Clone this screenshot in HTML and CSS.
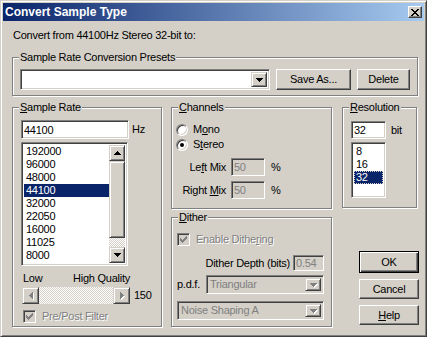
FILE: index.html
```html
<!DOCTYPE html>
<html lang="en">
<head>
<meta charset="UTF-8" />
<meta name="viewport" content="width=device-width, initial-scale=1" />
<title>Convert Sample Type</title>
<link rel="stylesheet" href="styles.css">
</head>
<body>
<div class="window">
    <div class="titlebar">
        <span class="title">Convert Sample Type</span>
        <button type="button" class="close-btn" aria-label="Close">
            <svg width="8" height="7" viewBox="0 0 8 7" shape-rendering="crispEdges"><path d="M0 0h2v1H0zM6 0h2v1H6zM1 1h2v1H1zM5 1h2v1H5zM2 2h4v1H2zM3 3h2v1H3zM2 4h4v1H2zM1 5h2v1H1zM5 5h2v1H5zM0 6h2v1H0zM6 6h2v1H6z"/></svg>
        </button>
    </div>

    <div class="dialog">
        <p class="intro">Convert from 44100Hz Stereo 32-bit to:</p>

        <div class="group presets">
            <span class="group-label">Sample Rate Conversion Presets</span>
            <div class="combo presets-combo">
                <span class="combo-value"></span>
                <span class="combo-btn"><svg width="7" height="4" viewBox="0 0 7 4" shape-rendering="crispEdges"><path d="M0 0h7v1H0zM1 1h5v1H1zM2 2h3v1H2zM3 3h1v1H3z"/></svg></span>
            </div>
            <button type="button" class="btn save-btn">Save As...</button>
            <button type="button" class="btn delete-btn">Delete</button>
        </div>

        <div class="columns">
            <div class="group rate">
                <span class="group-label"><u>S</u>ample Rate</span>
                <div class="field-row">
                    <input class="field rate-field" type="text" value="44100">
                    <span class="unit">Hz</span>
                </div>
                <div class="listbox rate-list">
                    <ul class="list-items">
                        <li>192000</li>
                        <li>96000</li>
                        <li>48000</li>
                        <li class="selected">44100</li>
                        <li>32000</li>
                        <li>22050</li>
                        <li>16000</li>
                        <li>11025</li>
                        <li>8000</li>
                        <li>6000</li>
                    </ul>
                    <div class="vscroll">
                        <span class="scroll-btn"><svg width="7" height="4" viewBox="0 0 7 4" shape-rendering="crispEdges"><path d="M3 0h1v1H3zM2 1h3v1H2zM1 2h5v1H1zM0 3h7v1H0z"/></svg></span>
                        <span class="scroll-thumb"></span>
                        <span class="scroll-track"></span>
                        <span class="scroll-btn"><svg width="7" height="4" viewBox="0 0 7 4" shape-rendering="crispEdges"><path d="M0 0h7v1H0zM1 1h5v1H1zM2 2h3v1H2zM3 3h1v1H3z"/></svg></span>
                    </div>
                </div>
                <div class="scale-labels"><span>Low</span><span>High Quality</span></div>
                <div class="slider-row">
                    <div class="hscroll">
                        <span class="scroll-btn"><svg class="grey-arrow" width="4" height="7" viewBox="0 0 4 7" shape-rendering="crispEdges"><path d="M3 0h1v7H3zM2 1h1v5H2zM1 2h1v3H1zM0 3h1v1H0z"/></svg></span>
                        <span class="scroll-track"></span>
                        <span class="scroll-btn"><svg class="grey-arrow" width="4" height="7" viewBox="0 0 4 7" shape-rendering="crispEdges"><path d="M0 0h1v7H0zM1 1h1v5H1zM2 2h1v3H2zM3 3h1v1H3z"/></svg></span>
                    </div>
                    <span class="slider-value">150</span>
                </div>
                <div class="check disabled">
                    <span class="check-box"><svg width="7" height="7" viewBox="0 0 7 7" shape-rendering="crispEdges"><path d="M6 0h1v1H6zM5 1h2v1H5zM0 2h1v1H0zM4 2h3v1H4zM0 3h2v1H0zM3 3h3v1H3zM0 4h5v1H0zM1 5h3v1H1zM2 6h1v1H2z"/></svg></span>
                    <span>Pre/Post Filter</span>
                </div>
            </div>

            <div class="col-mid">
                <div class="group channels">
                    <span class="group-label"><u>C</u>hannels</span>
                    <div class="radio-row"><span class="radio"></span><span>M<u>o</u>no</span></div>
                    <div class="radio-row"><span class="radio checked"></span><span>S<u>t</u>ereo</span></div>
                    <div class="mix-grid">
                        <span class="mix-label">Le<u>f</u>t Mix</span>
                        <input class="field mix-field" type="text" value="50" disabled>
                        <span>%</span>
                        <span class="mix-label">Right <u>M</u>ix</span>
                        <input class="field mix-field" type="text" value="50" disabled>
                        <span>%</span>
                    </div>
                </div>

                <div class="group dither">
                    <span class="group-label"><u>D</u>ither</span>
                    <div class="check disabled">
                        <span class="check-box"><svg width="7" height="7" viewBox="0 0 7 7" shape-rendering="crispEdges"><path d="M6 0h1v1H6zM5 1h2v1H5zM0 2h1v1H0zM4 2h3v1H4zM0 3h2v1H0zM3 3h3v1H3zM0 4h5v1H0zM1 5h3v1H1zM2 6h1v1H2z"/></svg></span>
                        <span>Enable Dithe<u>r</u>ing</span>
                    </div>
                    <div class="depth-row">
                        <span>Dither Depth (bits)</span>
                        <input class="field depth-field" type="text" value="0.54" disabled>
                    </div>
                    <div class="pdf-row">
                        <span>p.d.f.</span>
                        <div class="combo disabled pdf-combo">
                            <span class="combo-value">Triangular</span>
                            <span class="combo-btn"><svg width="7" height="4" viewBox="0 0 7 4" shape-rendering="crispEdges"><path d="M0 0h7v1H0zM1 1h5v1H1zM2 2h3v1H2zM3 3h1v1H3z"/></svg></span>
                        </div>
                    </div>
                    <div class="combo disabled shaping-combo">
                        <span class="combo-value">Noise Shaping A</span>
                        <span class="combo-btn"><svg width="7" height="4" viewBox="0 0 7 4" shape-rendering="crispEdges"><path d="M0 0h7v1H0zM1 1h5v1H1zM2 2h3v1H2zM3 3h1v1H3z"/></svg></span>
                    </div>
                </div>
            </div>

            <div class="col-right">
                <div class="group resolution">
                    <span class="group-label"><u>R</u>esolution</span>
                    <div class="field-row">
                        <input class="field bits-field" type="text" value="32">
                        <span class="unit">bit</span>
                    </div>
                    <ul class="listbox bits-list">
                        <li>8</li>
                        <li>16</li>
                        <li class="selected focused">32</li>
                    </ul>
                </div>
                <div class="actions">
                    <button type="button" class="btn default-btn">OK</button>
                    <button type="button" class="btn">Cancel</button>
                    <button type="button" class="btn"><u>H</u>elp</button>
                </div>
            </div>
        </div>
    </div>
</div>
</body>
</html>
```

FILE: styles.css
```css
/* Classic dialog look */
* {
    box-sizing: border-box;
}
html, body {
    margin: 0;
}
body {
    font-family: "Liberation Sans", Arial, sans-serif;
    font-size: 11px;
    line-height: 13px;
    letter-spacing: -0.25px;
    color: #000;
    background: #d4d0c8;
}
u {
    text-decoration-thickness: 1px;
    text-underline-offset: 1px;
}
.window {
    width: 427px;
    height: 337px;
    padding: 2px;
    background: #d4d0c8;
    border: 1px solid;
    border-color: #d4d0c8 #404040 #404040 #d4d0c8;
    box-shadow: inset 1px 1px 0 #fff, inset -1px -1px 0 #808080;
}
.titlebar {
    height: 18px;
    padding: 0 2px;
    display: flex;
    align-items: center;
    justify-content: space-between;
    background: linear-gradient(to right, #0a246a, #a6caf0);
}
.title {
    color: #fff;
    font-weight: bold;
    font-size: 12px;
    letter-spacing: 0;
}
.close-btn {
    width: 14px;
    height: 12px;
    padding: 0;
    display: flex;
    align-items: center;
    justify-content: center;
    background: #d4d0c8;
    border: 1px solid;
    border-color: #fff #404040 #404040 #fff;
    box-shadow: inset -1px -1px 0 #808080;
}
.dialog {
    padding: 8px 0 0 9px;
}
.intro {
    margin: 0 0 15px 1px;
}

/* group boxes */
.group {
    position: relative;
    border: 1px solid #808080;
    box-shadow: 1px 1px 0 #fff, inset 1px 1px 0 #fff;
}
.group-label {
    position: absolute;
    top: -7px;
    left: 6px;
    padding: 0 1px;
    background: #d4d0c8;
    white-space: nowrap;
}

/* bevels */
.btn {
    height: 21px;
    padding: 0;
    font: inherit;
    letter-spacing: inherit;
    color: #000;
    background: #d4d0c8;
    border: 1px solid;
    border-color: #fff #404040 #404040 #fff;
    box-shadow: inset -1px -1px 0 #808080;
}
.field {
    height: 19px;
    padding: 0 2px;
    font: inherit;
    letter-spacing: inherit;
    color: #000;
    background: #fff;
    border: 1px solid;
    border-color: #808080 #fff #fff #808080;
    box-shadow: inset 1px 1px 0 #404040, inset -1px -1px 0 #d4d0c8;
    outline: none;
}
.field:disabled {
    color: #808080;
    background: #d4d0c8;
}
.combo {
    height: 21px;
    display: flex;
    padding: 2px;
    background: #fff;
    border: 1px solid;
    border-color: #808080 #fff #fff #808080;
    box-shadow: inset 1px 1px 0 #404040, inset -1px -1px 0 #d4d0c8;
}
.combo-value {
    flex: 1;
    padding-left: 1px;
    display: flex;
    align-items: center;
    white-space: nowrap;
}
.combo-btn,
.scroll-btn {
    width: 16px;
    display: flex;
    align-items: center;
    justify-content: center;
    background: #d4d0c8;
    border: 1px solid;
    border-color: #d4d0c8 #404040 #404040 #d4d0c8;
    box-shadow: inset 1px 1px 0 #fff, inset -1px -1px 0 #808080;
}
.combo.disabled {
    background: #d4d0c8;
    color: #808080;
}
.combo.disabled svg,
.grey-arrow {
    fill: #808080;
    filter: drop-shadow(1px 1px 0 #fff);
}

/* presets */
.presets {
    width: 406px;
    height: 39px;
    padding: 11px 7px 0;
    display: flex;
    align-items: flex-start;
    gap: 6px;
}
.presets-combo {
    width: 250px;
}
.save-btn {
    width: 75px;
}
.delete-btn {
    width: 53px;
}

/* columns */
.columns {
    display: flex;
    height: 220px;
    margin-top: 11px;
}
.rate {
    width: 150px;
    padding: 12px 0 0 8px;
    display: flex;
    flex-direction: column;
}
.field-row {
    display: flex;
    align-items: center;
    gap: 3px;
}
.rate-field {
    width: 108px;
}
.listbox {
    margin: 3px 0 0;
    padding: 2px;
    list-style: none;
    background: #fff;
    border: 1px solid;
    border-color: #808080 #fff #fff #808080;
    box-shadow: inset 1px 1px 0 #404040, inset -1px -1px 0 #d4d0c8;
}
.listbox li,
.list-items li {
    height: 13px;
    padding-left: 2px;
    white-space: nowrap;
}
.listbox .selected {
    background: #0a246a;
    color: #fff;
}
.listbox .focused {
    outline: 1px dotted #d4d0c8;
    outline-offset: -1px;
}
.rate-list {
    width: 107px;
    height: 124px;
    display: flex;
}
.list-items {
    flex: 1;
    margin: 0;
    padding: 0;
    list-style: none;
    overflow: hidden;
}
.vscroll {
    width: 16px;
    display: flex;
    flex-direction: column;
}
.vscroll .scroll-btn {
    height: 16px;
}
.scroll-thumb {
    height: 77px;
    background: #d4d0c8;
    border: 1px solid;
    border-color: #d4d0c8 #404040 #404040 #d4d0c8;
    box-shadow: inset 1px 1px 0 #fff, inset -1px -1px 0 #808080;
}
.scroll-track {
    flex: 1;
    background-image: conic-gradient(#fff 25%, #d4d0c8 0 50%, #fff 0 75%, #d4d0c8 0);
    background-size: 2px 2px;
}
.scale-labels {
    width: 108px;
    margin: 6px 0 0 1px;
    padding-left: 1px;
    display: flex;
    justify-content: space-between;
}
.slider-row {
    margin: 2px 0 0 1px;
    display: flex;
    align-items: center;
    gap: 4px;
}
.hscroll {
    width: 108px;
    height: 17px;
    display: flex;
}
.hscroll .scroll-btn {
    width: 17px;
}
.check {
    display: flex;
    align-items: center;
    gap: 6px;
}
.rate .check {
    margin: 6px 0 0 2px;
}
.check-box {
    width: 13px;
    height: 13px;
    display: flex;
    align-items: center;
    justify-content: center;
    background: #fff;
    border: 1px solid;
    border-color: #808080 #fff #fff #808080;
    box-shadow: inset 1px 1px 0 #404040, inset -1px -1px 0 #d4d0c8;
}
.check.disabled {
    color: #808080;
    text-shadow: 1px 1px 0 #fff;
}
.check.disabled .check-box {
    background: #d4d0c8;
}
.check.disabled svg {
    fill: #808080;
}

/* channels and dither */
.col-mid {
    width: 161px;
    margin-left: 9px;
    display: flex;
    flex-direction: column;
}
.channels {
    height: 102px;
    padding: 14px 0 0 4px;
}
.radio-row {
    height: 15px;
    display: flex;
    align-items: center;
    gap: 5px;
}
.radio {
    position: relative;
    width: 12px;
    height: 12px;
    border-radius: 50%;
    background: #fff;
    border: 1px solid;
    border-color: #808080 #fff #fff #808080;
    box-shadow: inset 1px 1px 0 #404040, inset -1px -1px 0 #d4d0c8;
}
.radio.checked::after {
    content: "";
    position: absolute;
    left: 3px;
    top: 3px;
    width: 4px;
    height: 4px;
    border-radius: 50%;
    background: #000;
}
.mix-grid {
    margin-top: 6px;
    display: grid;
    grid-template-columns: 50px 34px auto;
    column-gap: 5px;
    row-gap: 5px;
    align-items: center;
}
.mix-label {
    text-align: right;
}
.mix-field {
    height: 18px;
}
.mix-grid span:nth-child(3n) {
    margin-left: 1px;
}
.dither {
    height: 110px;
    margin-top: 8px;
    padding: 15px 7px 0 5px;
    display: flex;
    flex-direction: column;
}
.depth-row {
    margin-top: 9px;
    display: flex;
    align-items: center;
    justify-content: flex-end;
    gap: 3px;
}
.depth-field {
    width: 31px;
    height: 16px;
}
.pdf-row {
    margin-top: 4px;
    display: flex;
    align-items: center;
    justify-content: space-between;
}
.pdf-combo {
    width: 118px;
    height: 19px;
}
.shaping-combo {
    width: 147px;
    height: 19px;
    margin-top: 7px;
}

/* resolution and buttons */
.col-right {
    width: 77px;
    margin-left: 10px;
    display: flex;
    flex-direction: column;
}
.resolution {
    width: 75px;
    height: 101px;
    padding: 13px 0 0 8px;
}
.bits-field {
    width: 35px;
    height: 18px;
}
.resolution .field-row {
    gap: 5px;
}
.bits-list {
    width: 35px;
    height: 56px;
}
.actions {
    margin: auto 0 2px 17px;
    display: flex;
    flex-direction: column;
    gap: 6px;
}
.actions .btn {
    width: 60px;
    height: 20px;
}
.actions .default-btn {
    height: 22px;
    border: 1px solid #000;
    box-shadow: inset 1px 1px 0 #fff, inset -1px -1px 0 #404040, inset -2px -2px 0 #808080;
}
```
